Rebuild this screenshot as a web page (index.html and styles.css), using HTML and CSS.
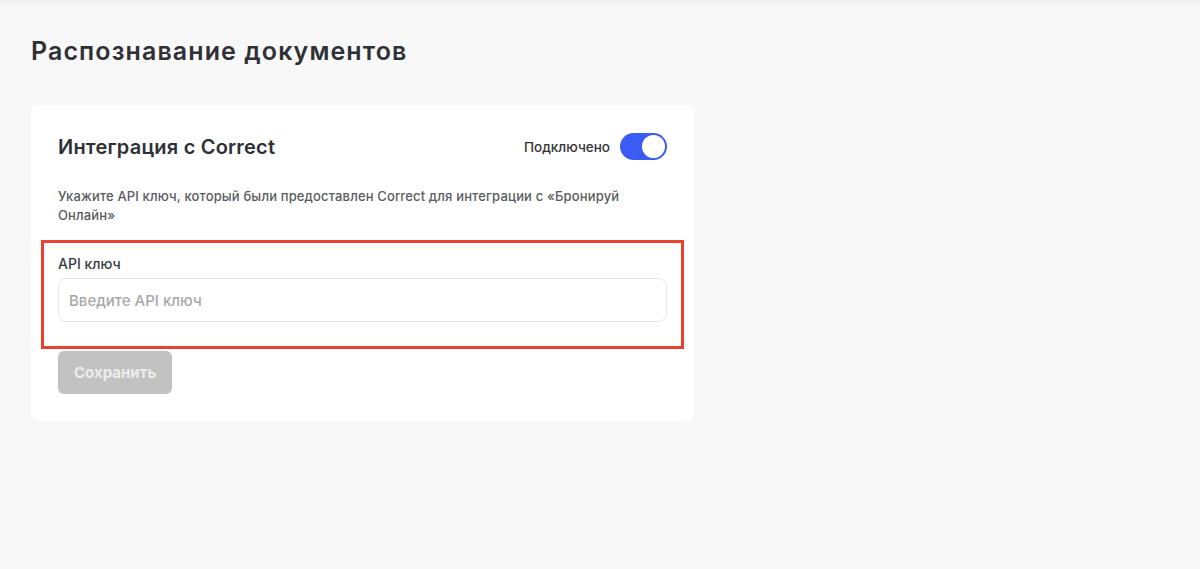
FILE: index.html
```html
<!DOCTYPE html>
<html lang="ru">

<head>
    <meta charset="utf-8" />
    <meta name="viewport" content="width=device-width, initial-scale=1.0" />
    <title>Распознавание документов</title>
    <link rel="stylesheet" href="styles.css">
</head>

<body>
    <div class="page">
        <h1 class="page-title">Распознавание документов</h1>

        <section class="card">
            <div class="card-head">
                <h2>Интеграция с Correct</h2>
                <label class="switch">
                    <span class="switch-label">Подключено</span>
                    <input type="checkbox" checked />
                    <span class="switch-track"><span class="switch-knob"></span></span>
                </label>
            </div>

            <p class="hint">Укажите API ключ, который были предоставлен Correct для интеграции с «Бронируй Онлайн»</p>

            <form class="key-form" action="" onsubmit="event.preventDefault()">
                <div class="field highlighted">
                    <label for="api_key">API ключ</label>
                    <input type="text" id="api_key" name="api_key" placeholder="Введите API ключ" />
                </div>
                <button type="submit" class="save" disabled>Сохранить</button>
            </form>
        </section>
    </div>
</body>

</html>
```

FILE: styles.css
```css
body {
    margin: 0;
    font-family: Inter, "Noto Sans", Arial, sans-serif;
    background: #f8f8f8;
    color: #2f3035;
    min-height: 569px;
    box-shadow: inset 0 6px 6px -4px rgba(0, 0, 0, 0.06);
}

.page {
    padding: 36px 31px;
}

.page-title {
    margin: 0 0 39px;
    font-size: 25px;
    font-weight: 600;
    line-height: 30px;
    letter-spacing: 1.1px;
    color: #2f3035;
}

.card {
    width: 663px;
    box-sizing: border-box;
    background: #fff;
    border-radius: 8px;
    padding: 28px 27px 27px;
}

.card-head {
    display: flex;
    align-items: center;
    justify-content: space-between;
}

.card-head h2 {
    margin: 0;
    font-size: 20px;
    font-weight: 600;
    line-height: 26px;
    letter-spacing: 0.2px;
}

.switch {
    display: flex;
    align-items: center;
    gap: 10px;
    cursor: pointer;
}

.switch input {
    display: none;
}

.switch-label {
    font-size: 13.5px;
    font-weight: 500;
    color: #333;
}

.switch-track {
    display: flex;
    align-items: center;
    justify-content: flex-end;
    width: 47px;
    height: 27px;
    box-sizing: border-box;
    padding: 2px;
    border-radius: 14px;
    background: #3a5cf5;
}

.switch-knob {
    width: 23px;
    height: 23px;
    border-radius: 50%;
    background: #fff;
}

.hint {
    margin: 27px 0 0;
    font-size: 13px;
    line-height: 19px;
    font-weight: 500;
    letter-spacing: 0.15px;
    color: #5a5b60;
}

.key-form {
    margin-top: 32px;
}

.field {
    display: flex;
    flex-direction: column;
    gap: 7px;
}

.field label {
    font-size: 14px;
    font-weight: 500;
    line-height: 14px;
    color: #3a3b40;
}

.field input {
    height: 44px;
    box-sizing: border-box;
    padding: 0 10px;
    border: 1px solid #e6e6e6;
    border-radius: 8px;
    font-family: inherit;
    font-size: 15px;
    font-weight: 500;
    color: #333;
    outline: none;
}

.field input::placeholder {
    color: #a8a8ab;
}

/* red frame drawn around the field */
.highlighted {
    position: relative;
}

.highlighted::after {
    content: "";
    position: absolute;
    top: -17px;
    left: -17px;
    right: -17px;
    bottom: -27px;
    border: 3px solid #e8432e;
    pointer-events: none;
}

.save {
    margin-top: 29px;
    height: 43px;
    padding: 0 16px;
    border: none;
    border-radius: 6px;
    background: #c2c2c2;
    color: #ececec;
    font-family: inherit;
    font-size: 15px;
    font-weight: 700;
}
```
